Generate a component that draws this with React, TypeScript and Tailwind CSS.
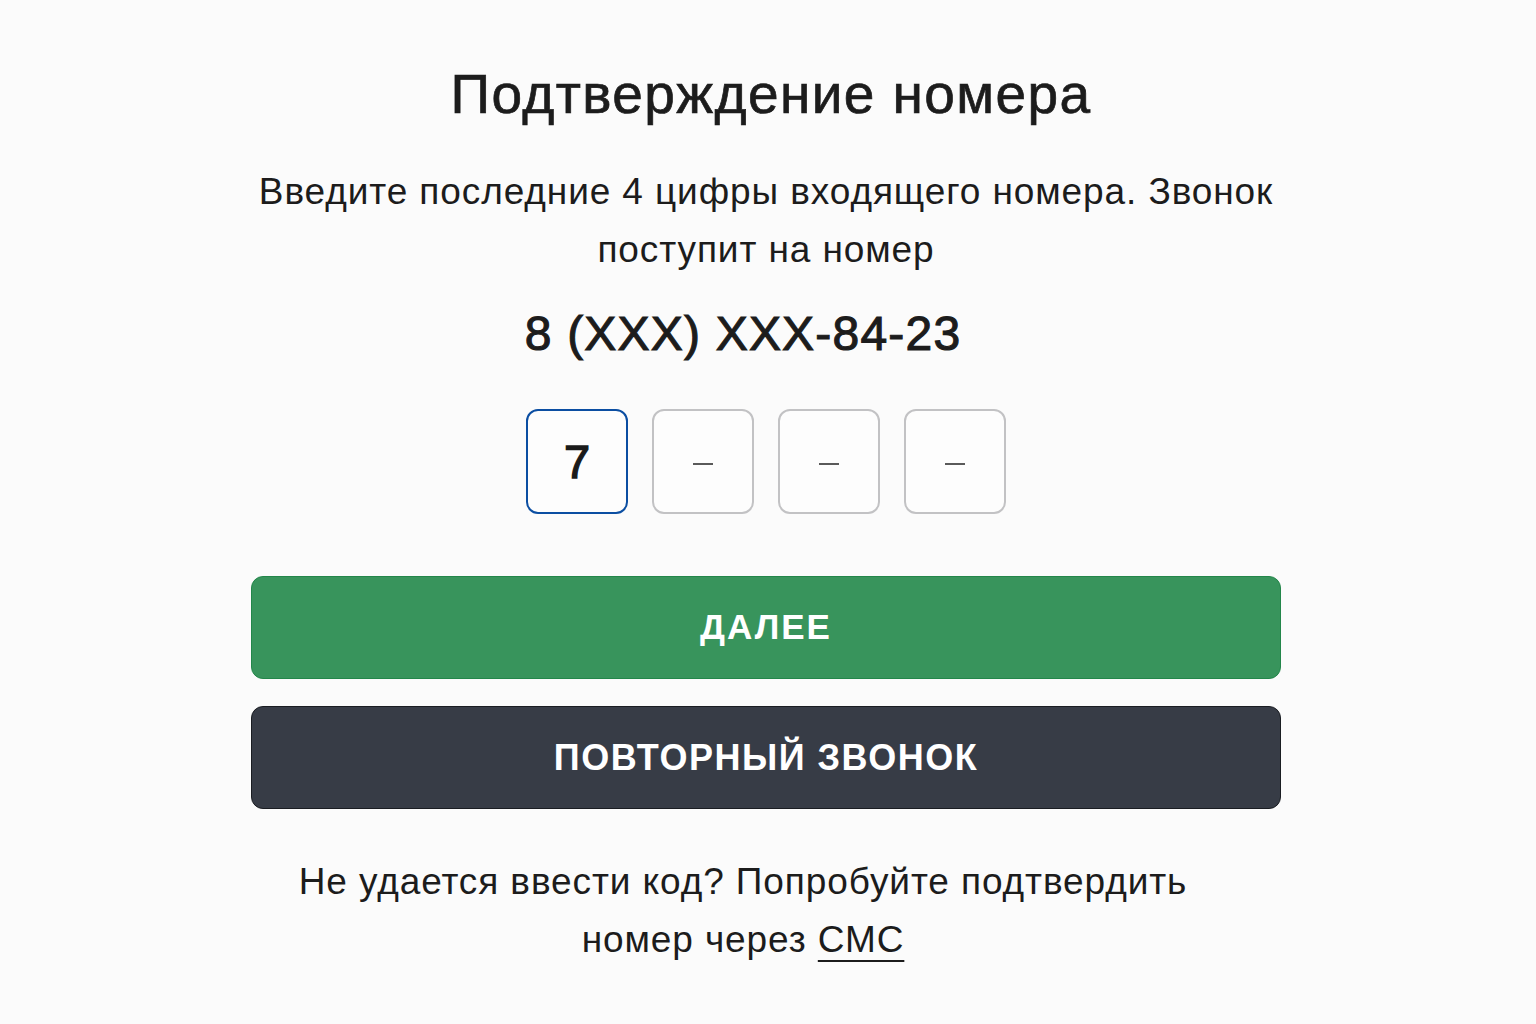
import { useState } from "react";

const font = { fontFamily: '"Liberation Sans", Arial, sans-serif' };

function CodeCell({ value, active }: { value: string; active?: boolean }) {
  return (
    <div
      className={`flex h-[105px] w-[102px] items-center justify-center rounded-[12px] border-2 bg-[#fdfdfd] ${
        active ? "border-[#0b4ea2]" : "border-[#c2c2c4]"
      }`}
    >
      {value ? (
        <span className="text-[47px] leading-none text-[#1a1a1a] [-webkit-text-stroke:1.4px_#1a1a1a]">{value}</span>
      ) : (
        <span className="mt-[4px] block h-[2px] w-[20px] bg-[#5a5a5a]"></span>
      )}
    </div>
  );
}

export default function App() {
  const [code] = useState(["7", "", "", ""]);

  return (
    <div className="flex min-h-[1024px] w-full justify-center bg-[#fbfbfb] pr-[4px] text-[#1c1c1c]" style={font}>
      <div className="flex w-[1030px] flex-col items-center pt-[62px]">
        {/* title */}
        <h1 className="pl-[10px] text-[55px] font-normal leading-[64px] tracking-[1.4px] [-webkit-text-stroke:0.7px_#1c1c1c]">
          Подтверждение номера
        </h1>

        <p className="mt-[37px] text-center text-[37px] leading-[58px] tracking-[0.9px]">
          Введите последние 4 цифры входящего номера. Звонок
          <br />
          поступит на номер
        </p>

        {/* phone */}
        <div className="mt-[25px] pr-[46px] text-[48px] leading-[60px] tracking-[1.2px] [-webkit-text-stroke:1.1px_#1c1c1c]">
          8 (XXX) XXX-84-23
        </div>

        <div className="mt-[45px] flex gap-[24px]">
          {code.map((c, i) => (
            <CodeCell key={i} value={c} active={i === 0} />
          ))}
        </div>

        <button className="mt-[62px] h-[103px] w-full rounded-[12px] border border-[#23864a] bg-[#38945c] text-[35px] font-bold tracking-[2px] text-white">
          ДАЛЕЕ
        </button>

        <button className="mt-[27px] h-[103px] w-full rounded-[12px] border border-[#1a1d22] bg-[#373c46] text-[36px] font-bold tracking-[1.5px] text-white">
          ПОВТОРНЫЙ ЗВОНОК
        </button>

        <p className="mt-[44px] pr-[46px] text-center text-[37px] leading-[58px] tracking-[0.9px]">
          Не удается ввести код? Попробуйте подтвердить
          <br />
          номер через{" "}
          <a href="#" className="underline decoration-[2px] underline-offset-[8px]">
            СМС
          </a>
        </p>
      </div>
    </div>
  );
}
